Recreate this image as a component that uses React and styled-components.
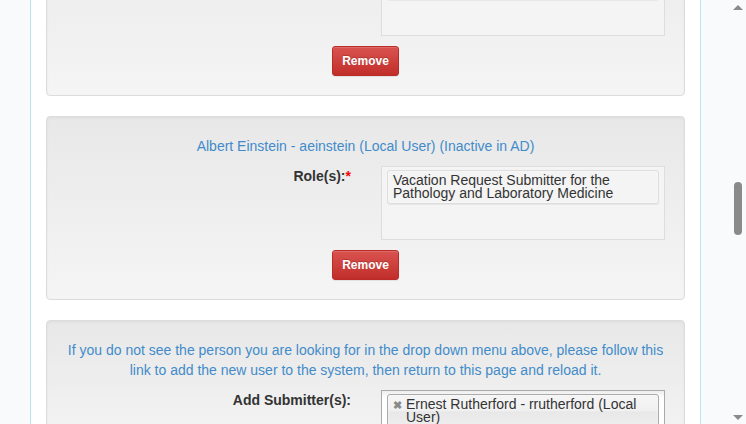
import React from 'react';
import styled, { createGlobalStyle } from 'styled-components';

const GlobalStyle = createGlobalStyle`
    html, body {
        margin:0;
        height:100%;
        overflow:hidden;
        background:#f9fafb;
        font-family:"Liberation Sans", Arial, sans-serif;
        font-size:14px;
        color:#333;
    }
`;

const Page = styled.div`
    display:flex;
    padding-left:30px;
    height:424px;
`;

const Main = styled.div`
    width:639px;
    padding:0 15px;
    background:#fff;
    border-left:1px solid #b9e4f2;
    border-right:1px solid #b9e4f2;
`;

const Well = styled.div`
    margin-top:${({ first }) => (first ? '-88px' : '20px')};
    padding:19px;
    border:1px solid #dcdcdc;
    border-radius:4px;
    background-image:linear-gradient(to bottom, #e8e8e8 0, #f5f5f5 100%);
    box-shadow:inset 0 1px 3px rgba(0,0,0,.05), 0 1px 0 rgba(255,255,255,.1);
    display:flex;
    flex-direction:column;
    align-items:stretch;
`;

const Title = styled.div`
    color:#428bca;
    text-align:center;
    line-height:20px;
    margin-bottom:10px;
`;

const FormRow = styled.div`
    display:grid;
    grid-template-columns:1fr 284px;
    column-gap:30px;
`;

const Label = styled.label`
    text-align:right;
    font-weight:bold;
    line-height:20px;
`;

const Required = styled.span`
    color:#f00;
`;

const Choices = styled.ul`
    list-style:none;
    margin:0;
    padding:0 0 ${({ disabled }) => (disabled ? '35px' : '8px')};
    min-height:${({ disabled }) => (disabled ? '37px' : '26px')};
    border:1px solid ${({ disabled }) => (disabled ? '#ddd' : '#aaa')};
    background:${({ disabled }) => (disabled ? '#f4f4f4' : 'linear-gradient(to bottom, #eee 1%, #fff 15%)')};
`;

const Choice = styled.li`
    position:relative;
    margin:3px 5px 0 5px;
    padding:3px 5px 3px ${({ removable }) => (removable ? '18px' : '5px')};
    line-height:13px;
    color:#333;
    border:1px solid ${({ removable }) => (removable ? '#aaa' : '#ddd')};
    border-radius:3px;
    background:${({ removable }) => (removable
        ? 'linear-gradient(to bottom, #f4f4f4 20%, #f0f0f0 50%, #e8e8e8 52%, #eee 100%)'
        : '#f4f4f4')};
    box-shadow:0 0 2px #fff inset, 0 1px 0 rgba(0,0,0,.05);
`;

const ChoiceClose = styled.span`
    position:absolute;
    left:5px;
    top:5px;
    font-size:11px;
    font-weight:bold;
    line-height:11px;
    color:#8a8a8a;
`;

const ButtonRow = styled.div`
    display:flex;
    justify-content:center;
    margin-top:10px;
`;

const RemoveButton = styled.button`
    font-family:"Liberation Sans", Arial, sans-serif;
    font-size:12px;
    font-weight:bold;
    line-height:18px;
    padding:5px 9px;
    color:#fff;
    border:1px solid #b92c28;
    border-radius:3px;
    background-image:linear-gradient(to bottom, #d9534f 0, #c12e2a 100%);
    text-shadow:0 -1px 0 rgba(0,0,0,.2);
    box-shadow:inset 0 1px 0 rgba(255,255,255,.15), 0 1px 1px rgba(0,0,0,.075);
    cursor:pointer;
`;

const Scrollbar = styled.div`
    position:fixed;
    top:0;
    right:0;
    width:17px;
    height:424px;
`;

const ScrollArrow = styled.div`
    position:absolute;
    left:4px;
    ${({ down }) => (down ? 'bottom:4px;' : 'top:5px;')}
    width:0;
    height:0;
    border-left:5px solid transparent;
    border-right:5px solid transparent;
    ${({ down }) => (down ? 'border-top:5px solid #8a8a8a;' : 'border-bottom:5px solid #8a8a8a;')}
`;

const Thumb = styled.div`
    position:absolute;
    left:5px;
    top:182px;
    width:8px;
    height:53px;
    border-radius:4px;
    background:#8a8a8a;
`;

const members = [
    {
        title: 'Marie Curie - mcurie (Local User)',
        role: 'Vacation Request Submitter for the Pathology and Laboratory Medicine',
    },
    {
        title: 'Albert Einstein - aeinstein (Local User) (Inactive in AD)',
        role: 'Vacation Request Submitter for the Pathology and Laboratory Medicine',
    },
];

const App = () => {
    return (
        <>
            <GlobalStyle />
            <Page>
                <Main>
                    {members.map((m, i) => (
                        <Well first={i === 0} key={i}>
                            <Title>{m.title}</Title>
                            <FormRow>
                                <Label>Role(s):<Required>*</Required></Label>
                                <Choices disabled>
                                    <Choice>{m.role}</Choice>
                                </Choices>
                            </FormRow>
                            <ButtonRow>
                                <RemoveButton>Remove</RemoveButton>
                            </ButtonRow>
                        </Well>
                    ))}
                    <Well>
                        <Title>
                            If you do not see the person you are looking for in the drop down menu above, please follow this
                            link to add the new user to the system, then return to this page and reload it.
                        </Title>
                        <FormRow>
                            <Label>Add Submitter(s):</Label>
                            <Choices>
                                <Choice removable>
                                    <ChoiceClose>✖</ChoiceClose>
                                    Ernest Rutherford - rrutherford (Local User)
                                </Choice>
                            </Choices>
                        </FormRow>
                    </Well>
                </Main>
                <Scrollbar>
                    <ScrollArrow />
                    <Thumb />
                    <ScrollArrow down />
                </Scrollbar>
            </Page>
        </>
    );
};

export default App;
